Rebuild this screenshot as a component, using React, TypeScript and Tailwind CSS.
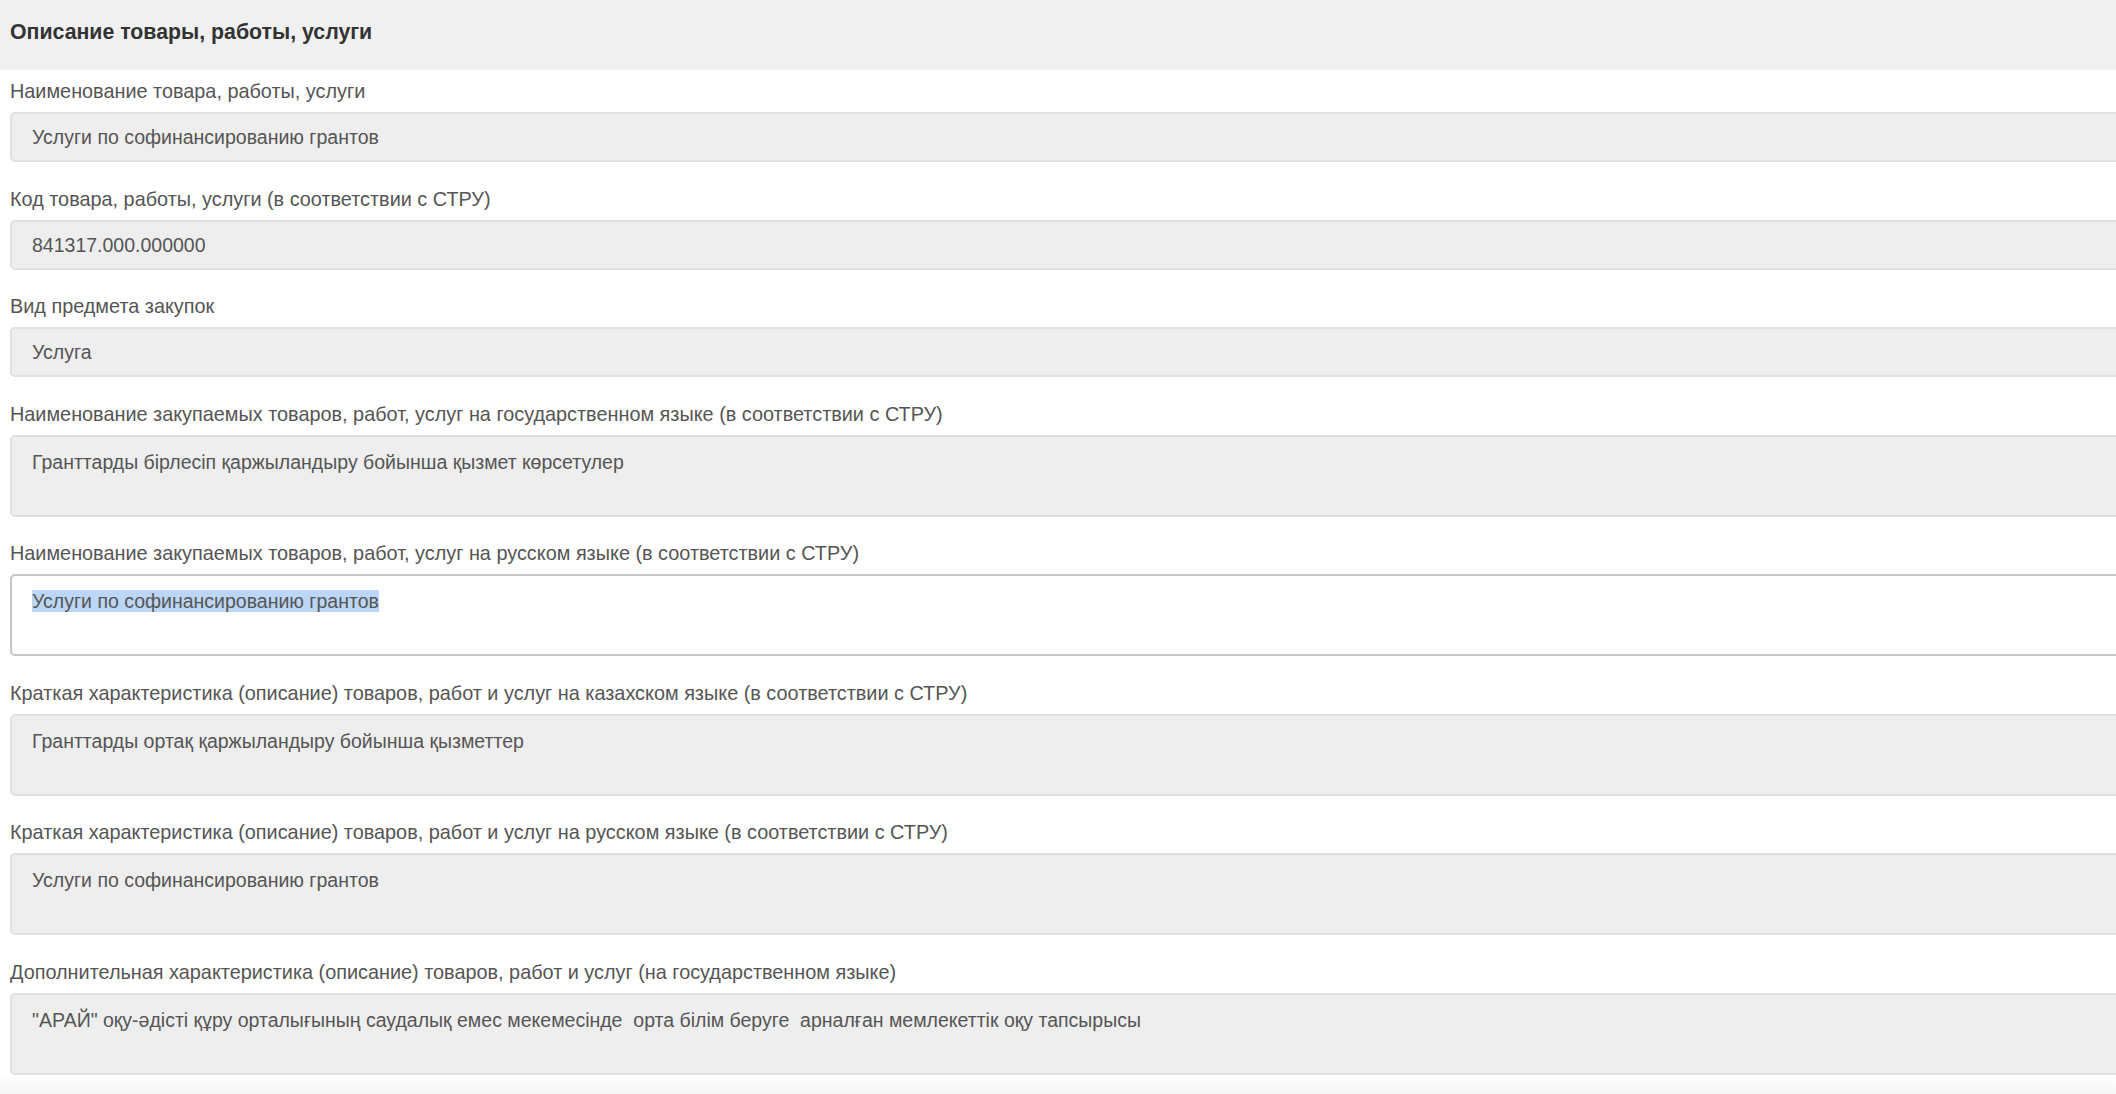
import React from 'react';

type Field = {
  label: string;
  value: string;
  multiline?: boolean;
  active?: boolean;
};

const fields: Field[] = [
  { label: 'Наименование товара, работы, услуги', value: 'Услуги по софинансированию грантов' },
  { label: 'Код товара, работы, услуги (в соответствии с СТРУ)', value: '841317.000.000000' },
  { label: 'Вид предмета закупок', value: 'Услуга' },
  {
    label: 'Наименование закупаемых товаров, работ, услуг на государственном языке (в соответствии с СТРУ)',
    value: 'Гранттарды бірлесіп қаржыландыру бойынша қызмет көрсетулер',
    multiline: true,
  },
  {
    label: 'Наименование закупаемых товаров, работ, услуг на русском языке (в соответствии с СТРУ)',
    value: 'Услуги по софинансированию грантов',
    multiline: true,
    active: true,
  },
  {
    label: 'Краткая характеристика (описание) товаров, работ и услуг на казахском языке (в соответствии с СТРУ)',
    value: 'Гранттарды ортақ қаржыландыру бойынша қызметтер',
    multiline: true,
  },
  {
    label: 'Краткая характеристика (описание) товаров, работ и услуг на русском языке (в соответствии с СТРУ)',
    value: 'Услуги по софинансированию грантов',
    multiline: true,
  },
  {
    label: 'Дополнительная характеристика (описание) товаров, работ и услуг (на государственном языке)',
    value: '"АРАЙ" оқу-әдісті құру орталығының саудалық емес мекемесінде  орта білім беруге  арналған мемлекеттік оқу тапсырысы',
    multiline: true,
  },
];

const FieldRow: React.FC<{ field: Field }> = ({ field }) => {
  const box = field.active
    ? 'bg-white border-[#c4c7cb]'
    : 'bg-[#eeeeee] border-[#dde0e4]';
  return (
    <div className="flex flex-col">
      <label className="block h-[26px] leading-[28px] text-[19.85px] text-[#555555] whitespace-nowrap">
        {field.label}
      </label>
      <div
        className={`mt-[9px] rounded-[5px] border-2 ${box} pl-[20px] ${
          field.multiline ? 'h-[82px] pt-[12px]' : 'h-[50px] pt-[10px]'
        }`}
      >
        <div className="leading-[26px] text-[19.5px] text-[#555555] whitespace-pre">
          {field.active ? <span className="bg-[#bcd6f7]">{field.value}</span> : field.value}
        </div>
      </div>
    </div>
  );
};

const App: React.FC = () => {
  return (
    <div className="w-full h-[1094px] overflow-hidden bg-white font-['Liberation_Sans',Arial,sans-serif]">
      <div className="h-[70px] bg-[#f0f0f0] flex items-center px-[10px] pb-[5px]">
        <h3 className="text-[21.3px] font-bold text-[#333333]">Описание товары, работы, услуги</h3>
      </div>
      <div className="w-[2150px] pl-[10px] pt-[7px] flex flex-col gap-[22.5px]">
        {fields.map((f, i) => (
          <FieldRow key={i} field={f} />
        ))}
      </div>
      <div className="mt-[1px] h-[24px] bg-gradient-to-b from-white to-[#f3f3f3]"></div>
    </div>
  );
};

export default App;
